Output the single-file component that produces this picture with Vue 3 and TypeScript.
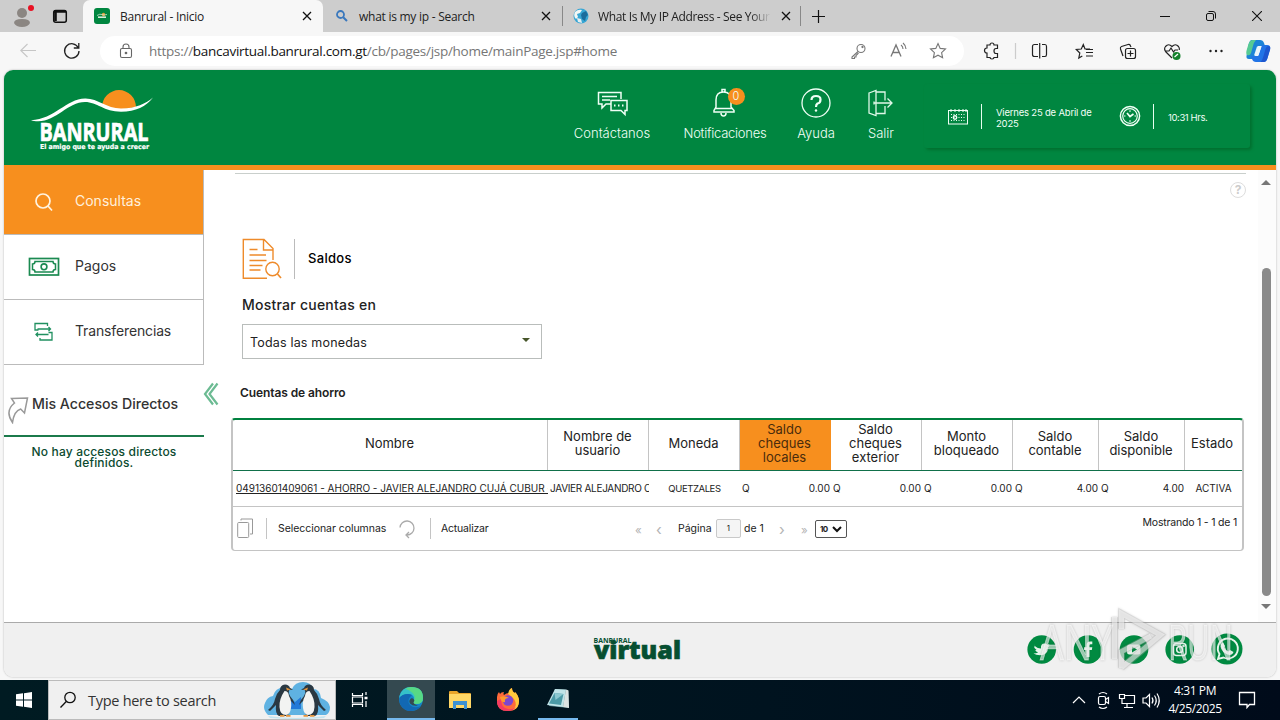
<script setup lang="ts">
interface Column {
  label: string[]
  active?: boolean
}
interface Tab {
  icon: 'bank' | 'search' | 'globe'
  title: string
  kind: string
}

const tabs: Tab[] = [
  { icon: 'bank', title: 'Banrural - Inicio', kind: 'current' },
  { icon: 'search', title: 'what is my ip - Search', kind: 'second' },
  { icon: 'globe', title: 'What Is My IP Address - See Your', kind: 'third' },
]

const columns: Column[] = [
  { label: ['Nombre'] },
  { label: ['Nombre de', 'usuario'] },
  { label: ['Moneda'] },
  { label: ['Saldo', 'cheques', 'locales'], active: true },
  { label: ['Saldo', 'cheques', 'exterior'] },
  { label: ['Monto', 'bloqueado'] },
  { label: ['Saldo', 'contable'] },
  { label: ['Saldo', 'disponible'] },
  { label: ['Estado'] },
]

const amounts: string[] = ['0.00', '0.00', '0.00', '4.00', '4.00']
</script>

<template>
  <div class="screen">
    <header class="tabbar">
      <div class="profile">
        <svg width="83" height="32" viewBox="0 0 83 32">
          <circle cx="22" cy="13" r="5" fill="#8b8682" />
          <path d="M14 23q0-4 8-4t8 4q-2 4-8 4t-8-4z" fill="#8b8682" />
          <circle cx="31" cy="8" r="3" fill="#e81123" />
          <rect x="53.700" y="10.500" width="12.600" height="11.800" rx="2" fill="none" stroke="#111" stroke-width="1.500" />
          <path d="M54 11.500h12M55.500 12v9" stroke="#111" stroke-width="2.600" />
        </svg>
      </div>
      <div v-for="t in tabs" :key="t.title" class="tab" :class="t.kind">
        <svg v-if="t.icon === 'bank'" width="16" height="16" viewBox="0 0 16 16">
          <rect width="16" height="16" rx="3" fill="#008640" />
          <circle cx="9.500" cy="6.500" r="1.700" fill="#e9a13b" />
          <path d="M3 7.500q3-2 5-1t5 0" stroke="#c9e4cb" fill="none" stroke-width=".8" />
          <path d="M4 9.200h8" stroke="#d6ecd9" stroke-width="1.600" />
        </svg>
        <svg v-else-if="t.icon === 'search'" width="16" height="16" viewBox="0 0 16 16">
          <circle cx="6.500" cy="6.500" r="3.500" fill="none" stroke="#3a78bd" stroke-width="1.800" />
          <path d="M9.200 9.200L13 13" stroke="#3a78bd" stroke-width="2" />
        </svg>
        <svg v-else width="16" height="16" viewBox="0 0 16 16">
          <circle cx="8" cy="8" r="7.500" fill="#38a6d4" />
          <path d="M2 4q3-3 7-2l-2 3-3 1 1 3-2 2q-3-3-1-7z" fill="#f3f7f4" />
          <path d="M9 5l4-2 2 4-2 2-1 4-3-2-1-4z" fill="#1b6c9c" />
          <path d="M4 10l4 1 1 4-4-1z" fill="#e6eef0" />
        </svg>
        <span class="tab-title">{{ t.title }}</span>
        <svg class="close" width="10" height="10" viewBox="0 0 10 10"><path d="M1 1l8 8M9 1L1 9" stroke="#111" stroke-width="1.300" /></svg>
      </div>
      <svg class="newtab" width="15" height="15" viewBox="0 0 15 15"><path d="M7.500 1v13M1 7.500h13" stroke="#111" stroke-width="1.200" /></svg>
      <div class="window-controls">
        <svg width="10" height="10" viewBox="0 0 10 10"><path d="M0 5.500h10" stroke="#111" /></svg>
        <svg width="10" height="10" viewBox="0 0 10 10"><rect x=".5" y="2.500" width="7" height="7" rx="1.500" fill="none" stroke="#111" /><path d="M2.500 .5H7q2.500 0 2.500 2.500v4.500" fill="none" stroke="#111" /></svg>
        <svg width="10" height="10" viewBox="0 0 10 10"><path d="M0 0l10 10M10 0L0 10" stroke="#111" stroke-width="1.100" /></svg>
      </div>
    </header>

    <div class="toolbar">
      <svg class="nav" width="100" height="38" viewBox="0 0 100 38" fill="none">
        <path d="M36 18.500H21M27.500 12l-6.700 6.500 6.700 6.500" stroke="#c6c6c6" stroke-width="1.100" />
        <path d="M78.300 15.800A7.200 7.200 0 1 0 79 19M78.800 11v5h-5" stroke="#222" stroke-width="1.300" />
      </svg>
      <div class="address">
        <svg width="14" height="16" viewBox="0 0 14 16" fill="none" stroke="#666" stroke-width="1.100"><rect x="1.500" y="5.500" width="11" height="9" rx="1.500" /><path d="M4 5.500V4a3 3 0 0 1 6 0v1.500" /><circle cx="7" cy="10" r=".8" fill="#666" /></svg>
        <span class="url">https://<b>bancavirtual.banrural.com.gt</b>/cb/pages/jsp/home/mainPage.jsp#home</span>
        <svg class="address-icons" width="110" height="32" viewBox="0 0 110 32" fill="none" stroke="#777" stroke-width="1.100">
          <circle cx="15" cy="13.500" r="4" /><path d="M12 16.500L6 22v1.500h2.500V22H10v-1.500l2.500-2.500" /><circle cx="16.500" cy="12" r=".6" />
          <path d="M45 21.500l5-11.500 5 11.500M46.800 17.500h6.500" stroke-width="1.300" /><path d="M55 10q2 1.500 2 4M57 8q3 2.500 3 6" />
          <path d="M92 8.500l2.200 4.900 5.300.6-3.900 3.600 1 5.200-4.600-2.600-4.600 2.600 1-5.200-3.900-3.600 5.300-.6z" />
        </svg>
      </div>
      <svg class="tools" width="316" height="38" viewBox="964 32 316 38" fill="none" stroke="#222" stroke-width="1.200">
        <path d="M987 45h3q0-2 2-2t2 2h3.500v3.500H996q-2 0-2 2.500t2 2.500h1.500v4H994q0 1.500-2 1.500t-2-1.500h-3V53q-2.500 0-2.500-2.500T987 48z" />
        <path d="M1015.500 43v16" stroke="#ccc" />
        <path d="M1038 44.500h-3.500q-2 0-2 2v8q0 2 2 2h3.500M1042 44.500h3q1.500 0 1.500 2v8q0 2-1.500 2h-3M1039.700 43v15.500" />
        <path d="M1090 49h-5l-1.700-4.500-2 4.500-5 .5 3.500 3.500-1 5 3.500-2M1086 52.500h7M1086 56h7M1086 49.500h7" />
        <rect x="1125.500" y="48.500" width="10" height="10" rx="2" /><path d="M1130.500 50.500v6M1127.500 53.500h6M1123 56l-2.500-7q-.5-2 1-2.500l6.500-2q2-.5 2.500 1.500l.5 1" />
        <path d="M1172 58l-6-6q-2.500-3-.5-5.500 3-3.500 6.500 0 3.500-3.500 6.500 0 1.200 1.500.8 3.500M1165 51h4l2-3 2.500 4 1.500-2h3" />
        <circle cx="1176.500" cy="56" r="4" fill="#13812c" stroke="none" /><path d="M1174.500 57l3.500-3" stroke="#fff" />
        <g fill="#222" stroke="none"><circle cx="1210.500" cy="51" r="1.200" /><circle cx="1216" cy="51" r="1.200" /><circle cx="1221.500" cy="51" r="1.200" /></g>
        <g stroke="none">
          <path d="M1252 40h8q3 0 4 3l1 3h-7l-4 13h-5q-3 0-2.500-3l2-11q1-5 3.500-5z" fill="#1c84d6" />
          <path d="M1247 55q-1.500-2 0-6l1.500-5q1.500-4 4.500-4h3q-2 2-3 6l-2 7q-1 3-4 2z" fill="#56ca93" />
          <path d="M1264 62h-8q-3 0-4-3l-1-3h7l4-11h5q4 0 3 4l-2.500 9q-1 4-3.500 4z" fill="#2174e6" />
          <path d="M1269 46q2 1 1 4l-2.500 8q-1 4-4 4h-3q2-2 3-6l2-7q1-3 3.500-3z" fill="#1d57cf" />
          <path d="M1257 46.500h4.500l-3 9H1254z" fill="#e9f5fb" />
        </g>
      </svg>
    </div>

    <main class="page">
      <header class="bank-header">
        <svg class="logo" width="126" height="66" viewBox="28 86 126 66">
          <path d="M102.100 107a16.900 16.900 0 0 1 33.800 0q-17 4.500-33.800 0z" fill="#f78f1e" />
          <path d="M31 120.300C55 119 66 99 85 98.500c13-.3 21 10 36 10 15 0 25-5 32-11-7 9-17 14.200-32 14.200-17 0-24-9.700-36-9.700-17 0-29 19.500-47 19.300-3 0-5-.4-7-1z" fill="#fff" />
          <text class="logo-name" x="39.500" y="141" textLength="109" lengthAdjust="spacingAndGlyphs">BANRURAL</text>
          <text class="logo-motto" x="40" y="148.500" textLength="109" lengthAdjust="spacingAndGlyphs">El amigo que te ayuda a crecer</text>
        </svg>
        <nav class="actions">
          <div class="action contact">
            <svg width="32" height="32" viewBox="0 0 32 32" fill="none" stroke="#effff5" stroke-width="1.500"><path d="M15 17h-5l-4 4v-4H2.500V5.500H25V12M6 9.500h15M6 13h8M15 13.500h16v10h-2v4l-4-4H15z" /><path d="M18 18.500h1.500M22 18.500h1.500M26 18.500h1.500" stroke-width="2" /></svg>
            <span>Contáctanos</span>
          </div>
          <div class="action notif">
            <svg width="32" height="32" viewBox="0 0 32 32" fill="none" stroke="#effff5" stroke-width="1.500"><path d="M13 5V2.500h3V5M7 20V13q0-8 7.500-8T22 13v7l3 3.500v1.500H5v-1.500z M6 21.500h17M12 26q0 3 2.500 3t2.500-3" /></svg>
            <i class="count">0</i>
            <span>Notificaciones</span>
          </div>
          <div class="action">
            <svg width="32" height="32" viewBox="0 0 32 32" fill="none" stroke="#effff5"><circle cx="16" cy="16" r="14" stroke-width="1.300" /><path d="M11.500 13q0-4 4.500-4t4.500 3.500-3 4Q16 17.500 16 20" stroke-width="2.200" /><circle cx="16" cy="23.500" r="1.200" fill="#effff5" stroke="none" /></svg>
            <span>Ayuda</span>
          </div>
          <div class="action">
            <svg width="32" height="32" viewBox="0 0 32 32" fill="none" stroke="#dff8e8" stroke-width="1.300"><path d="M4 6l7-2.500v25L4 26zM11 5h9v8.500M11 26.500h9V19M9 16h18M22.500 11.500L27 16l-4.500 4.500M9 14.500v3" /></svg>
            <span>Salir</span>
          </div>
        </nav>
        <div class="clock-card">
          <svg width="20" height="17" viewBox="0 0 20 17" fill="none" stroke="#effff5"><rect x=".5" y="2.500" width="19" height="13.500" /><path d="M3 1v3M7 1v3M11 1v3M15 1v3M18 1v3" /><path d="M3 6.500h14M3 9.500h14M3 12.500h14" stroke-dasharray="1 1.500" /><circle cx="7" cy="9.500" r="1.700" stroke-width="1.400" /></svg>
          <i class="bar"></i>
          <p class="date">Viernes 25 de Abril de 2025</p>
          <svg class="clock" width="22" height="22" viewBox="0 0 22 22" fill="none" stroke="#effff5"><circle cx="11" cy="11" r="9.600" stroke-width="1.500" /><circle cx="11" cy="11" r="7.300" stroke-width="1.200" /><path d="M8 8L11 11.500 14.500 9" stroke-width="1.700" /><path d="M11 5.200V7M11 15v2M5 11h1.500M15.500 11H17" /></svg>
          <i class="bar second-bar"></i>
          <p class="time">10:31 Hrs.</p>
        </div>
      </header>

      <div class="body">
        <aside class="sidebar">
          <div class="menu-item active">
            <svg width="32" height="32" viewBox="0 0 32 32" fill="none" stroke="#fff3e0" stroke-width="1.700"><circle cx="15" cy="15" r="7" /><path d="M20 20l4 4.500" /></svg>
            <span>Consultas</span>
          </div>
          <div class="menu-item">
            <svg width="32" height="32" viewBox="0 0 32 32" fill="none" stroke="#1b8a51" stroke-width="1.700"><rect x="1.500" y="7.500" width="29" height="16.500" /><path d="M7 10.500h18q0 2.500 2.500 2.500v5.500q-2.500 0-2.500 2.500H7q0-2.500-2.500-2.500V13Q7 13 7 10.500z" stroke-width="1.500" /><circle cx="16" cy="15.800" r="2.900" stroke-width="1.600" /></svg>
            <span>Pagos</span>
          </div>
          <div class="menu-item transfer">
            <svg width="32" height="32" viewBox="0 0 32 32" fill="none" stroke="#209060" stroke-width="1.300"><path d="M10.500 14H7V7.500h12.500V10M9.500 13h13M20.500 11l2 2-2 2M8 18.500h12.500M10 16.500l-2 2 2 2M12 22v2h12v-7.500h-3.500" /></svg>
            <span>Transferencias</span>
          </div>
          <div class="shortcuts-title">
            <svg width="22" height="30" viewBox="0 0 22 30" fill="none" stroke="#999" stroke-width="1.500"><path d="M4.500 4.500l16-.5L17.500 19l-3.800-4Q7 17 5.500 28.500-2.500 17 7.500 9z" /></svg>
            <span>Mis Accesos Directos</span>
          </div>
          <p class="shortcuts-empty">No hay accesos directos definidos.</p>
        </aside>

        <section class="content">
          <svg class="collapse" width="16" height="24" viewBox="0 0 16 24" fill="none" stroke="#6cbb93" stroke-width="2.200"><path d="M10 1.500L2 12l8 10.500M14.500 1.500l-8 10.500 8 10.500" /></svg>
          <hr />
          <div class="help"><span>?</span></div>
          <div class="section-title">
            <svg width="40" height="42" viewBox="0 0 40 42" fill="none" stroke="#ee8b2b" stroke-width="1.400"><path d="M25 40.300H1.300V1.500H22l9 9V22M21.500 2v10H31M7.500 11.500h8M7.500 17h16.500M7.500 22.500h17M7.500 27.500h13M7.500 32h11" /><circle cx="30.500" cy="31" r="6.700" /><path d="M35.500 36l3.500 4" stroke-width="1.600" /></svg>
            <i></i>
            <h2>Saldos</h2>
          </div>
          <label class="filter-label">Mostrar cuentas en</label>
          <div class="select"><span>Todas las monedas</span><i></i></div>
          <h3>Cuentas de ahorro</h3>

          <div class="grid">
            <div class="grid-row head">
              <div v-for="(c, i) in columns" :key="i" class="cell" :class="{ highlighted: c.active }">
                <span v-for="l in c.label" :key="l">{{ l }}</span>
              </div>
            </div>
            <div class="grid-row data">
              <div class="cell account">04913601409061 - AHORRO - JAVIER ALEJANDRO CUJÁ CUBUR - Q</div>
              <div class="cell user">JAVIER ALEJANDRO CUJÁ</div>
              <div class="cell currency">QUETZALES</div>
              <div v-for="(a, i) in amounts" :key="i" class="cell amount"><span>Q</span><span>{{ a }}</span></div>
              <div class="cell state">ACTIVA</div>
            </div>
            <div class="pager">
              <svg class="copy" width="17" height="22" viewBox="0 0 17 22" fill="none" stroke="#999"><rect x=".7" y="4.500" width="11" height="15" rx="1" /><path d="M4 2.500V1h11.500v15H13" /></svg>
              <i class="sep"></i>
              <span class="pick">Seleccionar columnas</span>
              <svg class="reload" width="18" height="20" viewBox="0 0 18 20" fill="none" stroke="#aaa" stroke-width="1.300"><path d="M2 8.500a7 7 0 1 1 7 7.500M11 13l-3 3 3 3" /></svg>
              <i class="sep"></i>
              <span class="refresh">Actualizar</span>
              <div class="pages">
                <span class="arrow">«</span><span class="arrow single">‹</span>
                <span class="page-word">Página</span><span class="page-box">1</span><span class="page-of">de 1</span>
                <span class="arrow single">›</span><span class="arrow last">»</span>
                <span class="size">10<svg width="10" height="7" viewBox="0 0 10 7" fill="none" stroke="#111" stroke-width="2"><path d="M1 1l4 4 4-4" /></svg></span>
              </div>
              <span class="showing">Mostrando 1 - 1 de 1</span>
            </div>
          </div>
        </section>

        <div class="scrollbar"><i class="up"></i><i class="thumb"></i><i class="down"></i></div>
      </div>

      <footer class="bank-footer">
        <svg class="virtual" width="90" height="30" viewBox="592 634 90 30" fill="#064f31">
          <text class="v-small" x="593.500" y="643" textLength="38" lengthAdjust="spacingAndGlyphs">BANRURAL</text>
          <text class="v-big" x="594" y="659" textLength="87" lengthAdjust="spacingAndGlyphs">virtual</text>
        </svg>
        <svg class="social" width="220" height="34" viewBox="1024 632 220 34">
          <g fill="#008a41"><circle cx="1041.700" cy="649.500" r="14.300" /><circle cx="1088" cy="649.500" r="14.300" /><circle cx="1134" cy="649.500" r="14.300" /><circle cx="1179.700" cy="649.500" r="14.300" /><circle cx="1227" cy="649" r="15.500" /></g>
          <g fill="#e8f5ec">
            <path d="M1035 646q3 3.500 7 3.500-.5-5 3.500-5 2 0 3 1.200l2-.7-1.200 2 1.200-.2-1.500 1.500q0 8-8 8-4 0-6.500-1.700 3 0 4.700-1.300-2.500-.4-3-2.400h1.400q-2.600-1-2.600-3.600l1.400.4q-2-2-1.400-4z" transform="translate(-1 -1)" />
            <path d="M1086.500 657v-7h-2.500v-2.800h2.500v-2q0-3.800 3.500-3.800h2.300v2.800h-1.500q-1.300 0-1.300 1.300v1.700h2.800l-.5 2.800h-2.300v7z" />
            <rect x="1127" y="644.500" width="13.500" height="10" rx="2.500" /><path d="M1132 646.500v6l5-3z" fill="#008a41" />
          </g>
          <g fill="none" stroke="#e8f5ec" stroke-width="1.500"><rect x="1173.500" y="643.500" width="12.500" height="12" rx="3" /><circle cx="1179.700" cy="649.500" r="3" /><circle cx="1183.500" cy="646" r=".5" /><path d="M1218 659l1.500-5a10 10 0 1 1 4 3.500z" stroke-width="1.900" /></g>
          <path d="M1223 642.500l2 3.500-1 1.500q1.500 3 4.500 4l1.500-1.500 3.500 2q-1 3-4 3-8-2-9-8.500 0-3 2.500-4z" fill="#e8f5ec" />
        </svg>
      </footer>
    </main>

    <footer class="taskbar">
      <div class="start"><svg width="16" height="16" viewBox="0 0 16 16" fill="#fff"><path d="M0 2.300L7 1.300v6.200H0zM8 1.200L16 0v7.500H8zM0 8.500h7v6.200l-7-1zM8 8.500h8V16l-8-1.200z" /></svg></div>
      <div class="search">
        <svg width="18" height="18" viewBox="0 0 18 18" fill="none" stroke="#111" stroke-width="1.300"><circle cx="11" cy="6.500" r="5.200" /><path d="M7.500 10.200L1.500 16.500" /></svg>
        <span>Type here to search</span>
        <svg class="penguins" width="68" height="38" viewBox="263 681 68 38">
          <path d="M268 715q-6-6-3-12 2-6 8-7 2-8 11-9 5 0 8 2 3-7 11-7 8 0 10 7 7 0 8 9 8 3 9 9 0 6-4 8z" fill="#5fb2e2" />
          <path d="M289 697l6 5 6-5v12h-12z" fill="#2279d8" />
          <path d="M268 716q27 4 58 0l-2 2q-27 2-54 0z" fill="#c4e4ef" />
          <path d="M280 690q0-5 5-5.500 4 0 5 3.500l3 1.500-4 .8q-1 2.700 1 5.700 4 4 5 9l-4-4-1 8q-1 7-4 7h-7q-4-2-3-11l-6 6-2-1q6-5 7-11 1-5 5-9z" fill="#2a3842" />
          <path d="M284.500 691q4 0 4.500 5 3 5 2 12-1 7-5 7-6 0-6.500-8-.5-8 5-16z" fill="#f2f3f2" />
          <path d="M286 687.500l5 2-4 1zM280 715h4.500v1.800H280zM286 715h4.500v1.800H286z" fill="#e2943d" />
          <path d="M314 690q0-5-5-5.500-4 0-5 3.500l-3 1.500 4 .8q1 2.700-1 5.700-4 4-5 9l4-4 1 8q1 7 4 7h7q4-2 3-11l6 6 2-1q-6-5-7-11-1-5-5-9z" fill="#2a3842" />
          <path d="M309.500 691q-4 0-4.500 5-3 5-2 12 1 7 5 7 6 0 6.500-8 .5-8-5-16z" fill="#f2f3f2" />
          <path d="M308 687.500l-5 2 4 1zM303.500 715h4.500v1.800h-4.500zM310 715h4.500v1.800H310z" fill="#e2943d" />
        </svg>
      </div>
      <div class="task view"><svg width="18" height="18" viewBox="0 0 18 18" fill="none" stroke="#fff" stroke-width="1.200"><path d="M1.500 2v2.500h10V2M1.500 16v-2.500h10V16M1.500 6h10v6h-10zM15 1v3M15 10v6" /><path d="M13.500 7h3" stroke-width="2.500" /></svg></div>
      <div class="task edge">
        <svg width="24" height="24" viewBox="0 0 24 24">
          <circle cx="12" cy="12" r="12" fill="#1485c8" />
          <path d="M.5 9Q3 0 12 0q12 0 12 11 0 6-7 6-4 0-2-3 1-7-6-7-6 0-8.500 5z" fill="#35c1c8" />
          <path d="M12 0q12 0 12 11 0 6-7 6-4 0-2.500-3 3-4-1-8Q9 2 6 2q3-2 6-2z" fill="#57d985" />
          <path d="M9 7q-6 0-8.800 4Q0 21 9 24h3q8-1 10-5-7 3-11-1-4-5 2-10-2-1-4-1z" fill="#1268b3" />
          <path d="M13 11q-4 2-2 5.500 3 3 8 2-4-1-4.500-3 1.500-2 .5-3z" fill="#334b53" />
        </svg>
      </div>
      <div class="task explorer"><svg width="22" height="20" viewBox="0 0 22 20"><path d="M0 2q0-1 1-1h7l2 2h11q1 0 1 1v14H0z" fill="#e9a52a" /><path d="M0 4h22v14H0z" fill="#ffd766" /><path d="M4 19v-8h14v8h-3v-4H7v4z" fill="#3d91d1" /></svg></div>
      <div class="task firefox">
        <svg width="24" height="24" viewBox="0 0 24 24">
          <path d="M1 9q0-3 2-5l1 2q1-2 4-2-1 2 0 3 2-2 5-2 0-4 3-5 0 4 3 5v-1q4 4 4 9 0 10-11 10Q1 23 1 13z" fill="#ff6a3a" />
          <path d="M16 0q0 4 3 5v-1q4 4 4 9 0 7-6 9 5-5 1-11-4-4-6-5 1-5 4-6z" fill="#ffc93c" />
          <path d="M1 13q0 10 11 10 5 0 8-4-4 3-8 2-7-1-7-10z" fill="#f53b62" />
          <circle cx="12" cy="12.500" r="5.200" fill="#7d46cf" /><path d="M4 9q5-2 9 1-5 0-4 4-4 1-5-5z" fill="#ff9a2c" />
        </svg>
      </div>
      <div class="task note"><svg width="24" height="24" viewBox="0 0 24 24"><path d="M9 2l13 1 1 18-20-2z" fill="#5d8f97" /><path d="M9 2l11 .5L17 20 1 18z" fill="#c0e4e8" /><path d="M8.500 6l9 1-2.500 11-12-1.500z" fill="#4b9aa6" /><path d="M8.500 6l9 1-8 6z" fill="#8cc8d0" /><path d="M20 2.500l2.500 1L23 21l-6-1z" fill="#dbe3e2" /></svg></div>
      <div class="tray">
        <svg width="100" height="40" viewBox="1066 680 100 40" fill="none" stroke="#fff" stroke-width="1.200">
          <path d="M1073 703l6-6 6 6" />
          <rect x="1098.500" y="696.500" width="7" height="8" rx="1.500" /><path d="M1105.500 699.500l3-2v6l-3-2M1099 694q4-3 8 0M1099 707q4 3 8 0" />
          <path d="M1124 695.500h10.500v8H1122v-3M1127 703.500v4M1124 707.500h9M1119.500 694.500h5v4h-5zM1122 698.500v2" />
          <path d="M1143 698h3l3.500-3.500v12l-3.500-3.500h-3zM1152 697.500q2 3 0 6M1154.500 695.500q3.500 5 0 10M1157 693.500q4.500 7 0 14" />
        </svg>
        <div class="when"><span>4:31 PM</span><span class="day">4/25/2025</span></div>
        <svg class="notice" width="18" height="18" viewBox="0 0 18 18" fill="none" stroke="#fff" stroke-width="1.300"><path d="M1.500 1.500h15v12h-5l-2.500 3v-3H1.500z" /></svg>
      </div>
    </footer>

    <div class="watermark">
      <svg width="210" height="76" viewBox="1036 600 210 76">
        <text x="1040" y="659.500" textLength="73" lengthAdjust="spacingAndGlyphs">ANY</text>
        <text x="1168" y="659.500" textLength="65" lengthAdjust="spacingAndGlyphs">RUN</text>
        <g class="play">
          <path class="edge-line" d="M1114.500 617v42M1121.500 668v-16.500L1151 636M1121.500 629v-15.500l39 21.500-39 32.500" />
          <path class="core" d="M1114.500 617v42M1121.500 668v-16.500L1151 636M1121.500 629v-15.500l39 21.500-39 32.500" />
        </g>
      </svg>
    </div>
  </div>
</template>

<style>
html,
body {
  margin: 0;
  overflow: hidden;
}
</style>

<style scoped>
* {
  box-sizing: border-box;
}
.screen {
  position: relative;
  width: 1280px;
  height: 720px;
  display: grid;
  grid-template-rows: 32px 38px 610px 40px;
  background: #f7f7f7;
  font-family: 'Open Sans', 'Noto Sans', sans-serif;
  overflow: hidden;
}
svg {
  display: block;
  flex: none;
}
p,
h2,
h3 {
  margin: 0;
  font-weight: 400;
}
i {
  font-style: normal;
  flex: none;
}
.tabbar {
  display: flex;
  align-items: center;
  background: #cdcdcd;
}
.profile {
  width: 83px;
  height: 32px;
}
.tab {
  height: 32px;
  display: flex;
  align-items: center;
  font-size: 12px;
  color: #222;
  white-space: nowrap;
}
.tab.current {
  width: 240px;
  padding: 0 11px;
  background: #f7f7f7;
  border-radius: 7px 7px 0 0;
}
.tab.second {
  width: 239px;
  padding: 0 11px;
}
.tab.third {
  width: 239px;
  padding: 0 11px 0 10px;
  border-left: 1px solid #888;
  border-right: 1px solid #888;
  height: 20px;
}
.tab-title {
  margin-left: 10px;
  flex: 1;
  letter-spacing: -0.26px;
}
.second .tab-title {
  margin-left: 9px;
  letter-spacing: -0.26px;
}
.third .tab-title {
  flex: none;
  width: 173px;
  margin: 0 10px 0 9px;
  letter-spacing: -0.36px;
  overflow: hidden;
  -webkit-mask-image: linear-gradient(90deg, #000 88%, transparent);
  mask-image: linear-gradient(90deg, #000 88%, transparent);
}
.newtab {
  margin-left: 10px;
}
.window-controls {
  margin-left: auto;
  margin-right: 18px;
  display: flex;
  gap: 36px;
}
.toolbar {
  display: flex;
  align-items: center;
}
.address {
  width: 864px;
  height: 30px;
  border-radius: 15px;
  background: #fff;
  display: flex;
  align-items: center;
  padding-left: 19px;
}
.url {
  margin-left: 16px;
  font-size: 13.500px;
  letter-spacing: -0.28px;
  color: #767676;
  white-space: nowrap;
}
.url b {
  font-weight: 400;
  color: #111;
}
.address-icons {
  margin-left: auto;
  margin-right: 8px;
}
.page {
  margin: 0 4px 3px;
  border-radius: 9px;
  overflow: hidden;
  background: #fff;
  display: grid;
  grid-template-rows: 100px 452px 55px;
  font-family: Inter, 'Open Sans', sans-serif;
  box-shadow: 0 0 2px #aaa;
}
.bank-header {
  background: #008640;
  border-bottom: 5px solid #f78f1e;
  display: flex;
  color: #f2fff7;
}
.logo {
  margin: 16px 0 0 24px;
  overflow: visible;
}
.logo-name {
  font: 700 24.500px 'Open Sans', sans-serif;
  fill: #fff;
  stroke: #fff;
  stroke-width: 0.7px;
}
.logo-motto {
  font: 700 6.800px 'DejaVu Sans', sans-serif;
  fill: #fff;
  stroke: #fff;
  stroke-width: 0.2px;
}
.actions {
  margin-left: 401.500px;
  display: grid;
  grid-template-columns: 113px 113px 69px 61px;
}
.action {
  position: relative;
  padding-top: 17px;
  display: flex;
  flex-direction: column;
  align-items: center;
  font-size: 13px;
  font-weight: 300;
  line-height: 20px;
}
.action span {
  margin-top: 4px;
}
.notif span {
  letter-spacing: -0.25px;
}
.count {
  position: absolute;
  left: 59px;
  top: 18px;
  width: 17px;
  height: 17px;
  border-radius: 50%;
  background: #f78f1e;
  font-size: 11px;
  line-height: 17px;
  text-align: center;
}
.clock-card {
  margin: 14px 0 0 12.500px;
  width: 326px;
  height: 64px;
  display: flex;
  align-items: center;
  padding-left: 24px;
  font-size: 9.500px;
  line-height: 11px;
  border-radius: 3px;
  box-shadow: 2px 2px 3px #00702f;
}
.bar {
  width: 1px;
  height: 25px;
  background: #e7fff0;
  margin-left: 13px;
}
.date {
  width: 106px;
  margin: 3px 0 0 14px;
  letter-spacing: -0.2px;
}
.clock {
  margin-left: 17px;
}
.second-bar {
  margin-left: 12px;
}
.time {
  margin: 3px 0 0 14px;
  letter-spacing: -0.4px;
}
.body {
  display: grid;
  grid-template-columns: 200px 1054px 18px;
  overflow: hidden;
}
.sidebar {
  color: #333;
}
.menu-item {
  height: 65px;
  display: flex;
  align-items: center;
  border-right: 1px solid #bbb;
  border-bottom: 1px solid #bbb;
  padding-left: 24px;
  font-size: 14px;
}
.menu-item span {
  margin-left: 15px;
  margin-top: -4px;
}
.transfer span {
  letter-spacing: -0.14px;
}
.menu-item.active {
  background: #f78f1e;
  color: #fff0dc;
}
.shortcuts-title {
  height: 72px;
  border-bottom: 2px solid #1b7a4b;
  display: flex;
  align-items: center;
  padding: 9px 0 0 3px;
  font-size: 14.150px;
  font-weight: 500;
  white-space: nowrap;
}
.shortcuts-title svg {
  margin-top: 8px;
}
.shortcuts-title span {
  margin-left: 3px;
  margin-top: -2px;
}
.shortcuts-empty {
  margin: 9px 20px 0;
  text-align: center;
  font-size: 12px;
  letter-spacing: 0.17px;
  font-weight: 500;
  line-height: 11px;
  color: #0b4a30;
}
.content {
  position: relative;
  color: #222;
}
.collapse {
  position: absolute;
  left: -1px;
  top: 212px;
}
hr {
  margin: 3px 12px 0 31px;
  border: 0;
  border-top: 1px solid #c9cfcc;
}
.help {
  margin: 8px 12px 0 auto;
  width: 16px;
  height: 16px;
  border: 1px solid #ddd;
  border-radius: 50%;
  color: #ccc;
  font-size: 12px;
  font-weight: 700;
  line-height: 14px;
  text-align: center;
}
.section-title {
  margin: 40px 0 0 38px;
  height: 42px;
  display: flex;
  align-items: center;
}
.section-title i {
  width: 1px;
  height: 40px;
  background: #bbb;
  margin-left: 12px;
}
.section-title h2 {
  font-size: 13px;
  letter-spacing: 0.3px;
  font-weight: 500;
  margin: -3px 0 0 13px;
  color: #000;
}
.filter-label {
  display: block;
  margin: 15px 0 0 38px;
  font-size: 14px;
  letter-spacing: 0.24px;
  line-height: 20px;
  font-weight: 500;
}
.select {
  margin: 9px 0 0 38px;
  width: 300px;
  height: 35px;
  border: 1px solid #b9bdbb;
  display: flex;
  align-items: center;
  justify-content: space-between;
  padding: 2px 11px 0 7px;
  font-size: 12.500px;
  letter-spacing: 0.18px;
}
.select i {
  border: 4px solid transparent;
  border-top: 4px solid #47562a;
  border-bottom: 0;
  margin-top: -5px;
}
h3 {
  margin: 25px 0 0 36px;
  font-size: 12px;
  letter-spacing: -0.1px;
  line-height: 18px;
  font-weight: 600;
}
.grid {
  margin: 16px 0 0 27px;
  width: 1013px;
  height: 133px;
  border: 2px solid #c4c4c4;
  border-bottom-width: 1px;
  border-top-color: #00813f;
  border-radius: 4px;
}
.grid-row {
  display: grid;
  grid-template-columns: 315px 101px 91px 91px 91px 91px 86px 86px 57px;
}
.head {
  height: 51px;
  border-bottom: 1px solid #11704a;
}
.head .cell {
  display: flex;
  flex-direction: column;
  justify-content: center;
  align-items: center;
  border-right: 1px solid #c4c4c4;
  font-size: 13px;
  line-height: 14px;
  padding: 0 1px 4px 0;
}
.head .cell:last-child {
  border: 0;
  padding-right: 3px;
}
.head .highlighted {
  background: #f78f1e;
  border-color: #f78f1e;
  color: #4a2c0c;
}
.data {
  height: 36px;
  border-bottom: 1px solid #c4c4c4;
  font-size: 10px;
  line-height: 35px;
}
.data .cell {
  overflow: hidden;
  white-space: nowrap;
}
.account {
  padding-left: 3px;
  text-decoration: underline;
}
.user {
  padding-left: 2px;
  letter-spacing: -0.3px;
}
.currency,
.state {
  text-align: center;
}
.currency {
  font-size: 9.500px;
  letter-spacing: -0.4px;
}
.amount {
  display: flex;
  justify-content: space-between;
  padding: 0 1px 0 2px;
}
.pager {
  height: 43px;
  display: flex;
  align-items: center;
  font-size: 10.500px;
  white-space: nowrap;
}
.copy {
  margin-left: 4px;
}
.sep {
  width: 1px;
  height: 21px;
  background: #c4c4c4;
  margin-left: 12px;
}
.pick {
  margin-left: 11px;
  width: 108px;
  letter-spacing: -0.05px;
}
.reload {
  margin-left: 12px;
}
.refresh {
  margin-left: 10px;
  width: 48px;
  letter-spacing: -0.2px;
}
.reload + .sep {
  margin-left: 14px;
}
.pages {
  margin-left: 146px;
  display: flex;
  align-items: center;
  width: 214px;
}
.arrow {
  color: #b4b4b4;
  font-size: 11.500px;
  width: 21px;
  margin-top: 2px;
  flex: none;
}
.single {
  font-size: 15px;
  width: 22px;
}
.arrow.last {
  width: 14px;
}
.page-word {
  width: 38px;
}
.page-box {
  width: 25px;
  height: 19px;
  flex: none;
  border: 1px solid #c9c9c9;
  border-radius: 2px;
  background: #f5f5f5;
  font-size: 8px;
  line-height: 17px;
  text-align: center;
}
.page-of {
  margin-left: 3px;
  width: 35px;
}
.size {
  width: 32px;
  height: 18px;
  flex: none;
  border: 1px solid #555;
  border-radius: 2px;
  display: flex;
  align-items: center;
  justify-content: space-between;
  padding: 0 4px;
  margin-top: 1px;
  font-size: 8px;
  font-weight: 700;
  letter-spacing: -0.6px;
}
.showing {
  margin: -12px 5px 0 auto;
  letter-spacing: -0.2px;
}
.scrollbar {
  display: flex;
  flex-direction: column;
  align-items: center;
  background: #fcfcfc;
  padding: 10px 2px 0 0;
}
.up,
.down {
  border: 5px solid transparent;
  border-top: 0;
  border-bottom: 5px solid #777;
}
.down {
  border-top: 5px solid #777;
  border-bottom: 0;
  margin-top: 8px;
}
.thumb {
  width: 9px;
  height: 328px;
  border-radius: 5px;
  background: #8a8a8a;
  margin-top: 83px;
}
.bank-footer {
  background: #f0f0f0;
  border-top: 1px solid #aaa;
  display: flex;
}
.virtual {
  margin: 11px 0 0 588px;
  overflow: visible;
}
.v-small {
  font: 700 7.500px 'Open Sans', sans-serif;
}
.v-big {
  font: 800 25px 'Open Sans', sans-serif;
  stroke: #064f31;
  stroke-width: 0.7px;
}
.social {
  margin: 9px 0 0 342px;
}
.taskbar {
  background: linear-gradient(90deg, #001b22, #00131f 60%, #000b1a);
  display: flex;
  color: #fff;
}
.start {
  width: 48px;
  display: grid;
  place-items: center;
}
.search {
  width: 288px;
  background: #f0f0f0;
  border: 1px solid #bbb;
  display: flex;
  align-items: center;
  padding-left: 10px;
  color: #333;
  font-size: 14.500px;
  letter-spacing: -0.28px;
  white-space: nowrap;
}
.search span {
  margin-left: 11px;
}
.penguins {
  margin: 0 4px 0 auto;
}
.task {
  width: 48px;
  display: grid;
  place-items: center;
}
.view {
  width: 51px;
  padding-right: 3px;
}
.edge {
  background: #344950;
  border-bottom: 2px solid #76b9ed;
}
.explorer {
  margin-left: 1px;
}
.note {
  width: 40px;
  margin-left: 6px;
  border-bottom: 2px solid #76b9ed;
}
.tray {
  margin-left: auto;
  width: 214px;
  display: flex;
  align-items: center;
}
.when {
  width: 58px;
  display: flex;
  flex-direction: column;
  align-items: center;
  font-size: 12px;
  line-height: 18px;
  letter-spacing: -0.4px;
  white-space: nowrap;
}
.notice {
  margin-left: 14px;
}
.watermark {
  position: absolute;
  left: 1036px;
  top: 600px;
  filter: drop-shadow(0 0 1px rgba(0, 0, 0, 0.3));
}
.watermark svg {
  overflow: visible;
}
.watermark text {
  font: 400 50px 'Open Sans', sans-serif;
  fill: #fff;
  fill-opacity: 0.6;
  stroke: #fff;
  stroke-opacity: 0.45;
  stroke-width: 1px;
}
.play path {
  fill: none;
}
.edge-line {
  stroke: #bbb;
  stroke-opacity: 0.3;
  stroke-width: 7px;
}
.core {
  stroke: #fff;
  stroke-opacity: 0.5;
  stroke-width: 5px;
}
</style>
